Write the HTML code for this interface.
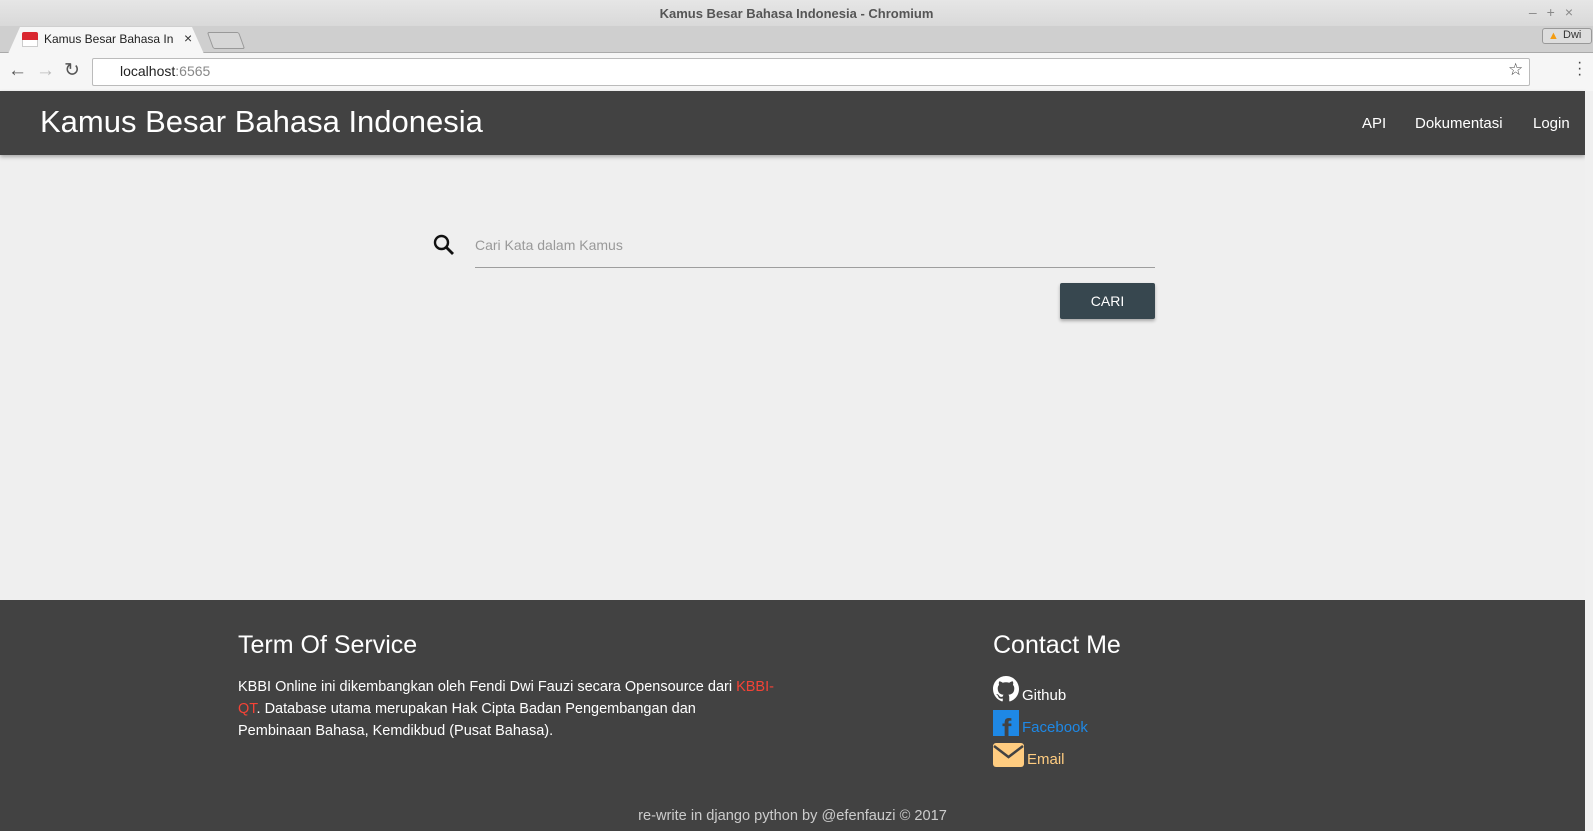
<!DOCTYPE html>
<html><head><meta charset="utf-8"><style>
*{margin:0;padding:0;box-sizing:border-box}
body{width:1593px;height:831px;overflow:hidden;background:#efefef;font-family:"Liberation Sans",sans-serif;position:relative}
.abs{position:absolute}
#tb{left:0;top:0;width:1593px;height:26px;background:linear-gradient(#e6e6e6,#d9d9d9);font-size:13px;font-weight:bold;color:#555;text-align:center;line-height:27px}
#ts{left:0;top:26px;width:1593px;height:27px;background:#cfcfcf;border-bottom:1px solid #aaa}
#tool{left:0;top:53px;width:1593px;height:38px;background:#f6f6f6}
#url{left:92px;top:58px;width:1438px;height:28px;background:#fff;border:1px solid #bbb;border-radius:2px}
#hdr{left:0;top:91px;width:1585px;height:64px;background:#424242;box-shadow:0 2px 4px rgba(0,0,0,.3);color:#fff}
#sb{left:1585px;top:91px;width:8px;height:740px;background:#f0f0f0}
#ft{left:0;top:600px;width:1585px;height:231px;background:#424242;color:#fff}
</style></head><body>
<div class="abs" id="tb">Kamus Besar Bahasa Indonesia - Chromium</div>
<div class="abs" style="right:10px;top:4px;font-size:14px;color:#888;letter-spacing:10px">–+×</div>
<div class="abs" id="ts"></div>
<div class="abs" style="left:8px;top:27px;width:196px;height:27px;background:#f6f6f6;clip-path:polygon(0 100%,12px 0,184px 0,196px 100%)"></div>
<div class="abs" style="left:210px;top:32px;width:32px;height:17px;border:1px solid #999;background:#d6d6d6;transform:skewX(20deg);border-radius:2px"></div>
<div class="abs" style="left:22px;top:32px;width:16px;height:8px;background:#d9262f;border-radius:2px 2px 0 0"></div>
<div class="abs" style="left:22px;top:40px;width:16px;height:7px;background:#fff;border:1px solid #ccc;border-top:none"></div>
<div class="abs" style="left:44px;top:32px;font-size:12px;color:#222">Kamus Besar Bahasa In</div>
<div class="abs" style="left:184px;top:30px;font-size:14px;color:#333">×</div>
<div class="abs" style="left:1542px;top:28px;width:50px;height:16px;border:1px solid #999;border-radius:3px;background:#ddd;font-size:11px;color:#333;padding-left:20px">Dwi</div>
<div class="abs" style="left:1548px;top:30px;color:#f39c12;font-size:11px">▲</div>
<div class="abs" id="tool"></div>
<div class="abs" style="left:8px;top:60px;font-size:19px;color:#555">←</div>
<div class="abs" style="left:36px;top:60px;font-size:19px;color:#bbb">→</div>
<div class="abs" style="left:64px;top:59px;font-size:19px;color:#555">↻</div>
<div class="abs" id="url"></div>
<div class="abs" style="left:120px;top:63px;font-size:14px;color:#222">localhost<span style="color:#888">:6565</span></div>
<div class="abs" style="left:1508px;top:60px;font-size:17px;color:#444">☆</div>
<div class="abs" style="left:1577px;top:60px;font-size:16px;color:#444;line-height:6px">·<br>·<br>·</div>
<div class="abs" id="hdr">
 <div class="abs" style="left:40px;top:13px;font-size:31px">Kamus Besar Bahasa Indonesia</div>
 <div class="abs" style="left:1362px;top:24px;font-size:15px">API</div>
 <div class="abs" style="left:1415px;top:24px;font-size:15px">Dokumentasi</div>
 <div class="abs" style="left:1533px;top:24px;font-size:15px">Login</div>
</div>
<div class="abs" id="sb"></div>
<svg class="abs" style="left:432px;top:233px" width="24" height="24" viewBox="0 0 24 24"><circle cx="9.5" cy="9.5" r="6.5" fill="none" stroke="#111" stroke-width="2.4"/><path d="M14 14l7 7" stroke="#111" stroke-width="2.8"/></svg>
<div class="abs" style="left:475px;top:237px;font-size:14px;color:#999">Cari Kata dalam Kamus</div>
<div class="abs" style="left:475px;top:267px;width:680px;height:1px;background:#9e9e9e"></div>
<div class="abs" style="left:1060px;top:283px;width:95px;height:36px;background:#37474f;border-radius:2px;box-shadow:0 2px 3px rgba(0,0,0,.3);color:#fff;font-size:14px;text-align:center;line-height:36px">CARI</div>
<div class="abs" id="ft">
 <div class="abs" style="left:238px;top:31px;font-size:25px">Term Of Service</div>
 <div class="abs" style="left:238px;top:76px;width:545px;font-size:14.5px;line-height:22px">KBBI Online ini dikembangkan oleh Fendi Dwi Fauzi secara Opensource dari <span style="color:#f44336">KBBI-QT</span>. Database utama merupakan Hak Cipta Badan Pengembangan dan<br>Pembinaan Bahasa, Kemdikbud (Pusat Bahasa).</div>
 <div class="abs" style="left:993px;top:31px;font-size:25px">Contact Me</div>
 <svg class="abs" style="left:993px;top:76px" width="26" height="26" viewBox="0 0 16 16"><path fill="#fff" d="M8 0C3.58 0 0 3.58 0 8c0 3.54 2.29 6.53 5.47 7.59.4.07.55-.17.55-.38v-1.33c-2.23.48-2.7-1.07-2.7-1.07-.36-.92-.89-1.17-.89-1.17-.73-.5.05-.49.05-.49.8.06 1.23.83 1.23.83.71 1.22 1.87.87 2.33.66.07-.52.28-.87.51-1.07-1.78-.2-3.64-.89-3.64-3.95 0-.87.31-1.59.82-2.15-.08-.2-.36-1.02.08-2.12 0 0 .67-.21 2.2.82A7.6 7.6 0 0 1 8 3.87c.68 0 1.36.09 2 .27 1.53-1.04 2.2-.82 2.2-.82.44 1.1.16 1.92.08 2.12.51.56.82 1.27.82 2.15 0 3.07-1.87 3.75-3.65 3.95.29.25.54.73.54 1.48v2.2c0 .21.15.46.55.38A8 8 0 0 0 16 8c0-4.42-3.58-8-8-8z"/></svg>
 <div class="abs" style="left:1022px;top:87px;font-size:15px">Github</div>
 <div class="abs" style="left:993px;top:110px;width:26px;height:26px;background:#1e88e5;overflow:hidden"><div style="position:absolute;left:9px;top:3px;font:bold 28px 'Liberation Sans';color:#424242">f</div></div>
 <div class="abs" style="left:1022px;top:119px;font-size:15px;color:#1e88e5">Facebook</div>
 <svg class="abs" style="left:993px;top:143px" width="31" height="24" viewBox="0 0 31 24"><rect x="0" y="0" width="31" height="24" rx="3" fill="#ffcc80"/><path d="M1 3l14.5 11L30 3" fill="none" stroke="#424242" stroke-width="2.5"/></svg>
 <div class="abs" style="left:1027px;top:151px;font-size:15px;color:#ffcc80">Email</div>
 <div class="abs" style="left:0;width:1585px;top:208px;text-align:center;font-size:14.6px;color:#ccc">re-write in django python by @efenfauzi © 2017</div>
</div>
</body></html>
